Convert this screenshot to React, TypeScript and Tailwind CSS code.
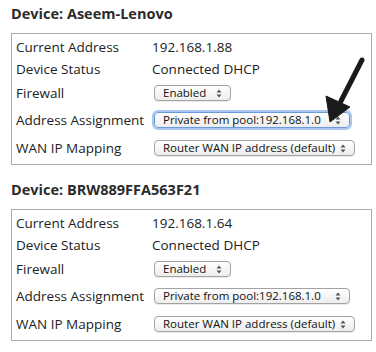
import React from 'react';

type Row = { label: string; value: string; kind: 'text' | 'select'; width?: number; focus?: boolean };

function Updown() {
  return (
    <svg width="6" height="9" viewBox="0 0 6 9" className="shrink-0">
      <path d="M3 0.5 L5.5 3.5 H0.5 Z" fill="#555" />
      <path d="M3 8.5 L5.5 5.5 H0.5 Z" fill="#555" />
    </svg>
  );
}

function FakeSelect({ text, width, focus }: { text: string; width: number; focus?: boolean }) {
  return (
    <div
      style={{ width }}
      className={`flex h-[16px] items-center justify-between rounded-[4px] border bg-gradient-to-b from-white to-[#ededed] pl-[8px] pr-[8px] text-[11.5px] leading-none whitespace-nowrap text-[#111] ${
        focus
          ? 'border-[#6c9ad8] shadow-[0_0_0_2px_#a9c7ef]'
          : 'border-[#a3a3a3] shadow-[0_1px_0_rgba(0,0,0,0.08)]'
      }`}
    >
      <span>{text}</span>
      <Updown />
    </div>
  );
}

function Device({ name, address, focus }: { name: string; address: string; focus?: boolean }) {
  const rows: Row[] = [
    { label: 'Current Address', value: address, kind: 'text' },
    { label: 'Device Status', value: 'Connected DHCP', kind: 'text' },
    { label: 'Firewall', value: 'Enabled', kind: 'select', width: 77 },
    { label: 'Address Assignment', value: 'Private from pool:192.168.1.0', kind: 'select', width: 196, focus },
    { label: 'WAN IP Mapping', value: 'Router WAN IP address (default)', kind: 'select', width: 201 },
  ];
  const heights = ['h-[23px]', 'h-[21px]', 'h-[26px]', 'h-[28px]', 'h-[28px]'];
  return (
    <div>
      <h2 className="h-[33px] pt-[5px] text-[14.5px] font-bold leading-[18px] text-[#2b2b2b]">Device: {name}</h2>
      <div className="w-[361px] border border-[#ababab] bg-white px-[4px] py-[2px]">
        {rows.map((r, i) => (
          <div key={r.label} className={`flex items-center ${heights[i]}`}>
            <div className="w-[136px] text-[13.5px] text-[#222]">{r.label}</div>
            {r.kind === 'text' ? (
              <div className="text-[13.5px] text-[#222]">{r.value}</div>
            ) : (
              <div className="pl-[2px]">
                <FakeSelect text={r.value} width={r.width!} focus={r.focus} />
              </div>
            )}
          </div>
        ))}
      </div>
    </div>
  );
}

export default function App() {
  return (
    <div
      className="relative h-[352px] w-[376px] overflow-hidden bg-white pl-[11px]"
      style={{ fontFamily: '"Lucida Grande", "Open Sans", sans-serif' }}
    >
      <div className="flex flex-col gap-[11px]">
        <Device name="Aseem-Lenovo" address="192.168.1.88" focus />
        <Device name="BRW889FFA563F21" address="192.168.1.64" />
      </div>
      {/* annotation arrow pointing at the address assignment select */}
      <svg className="absolute left-0 top-0" width="376" height="352" viewBox="0 0 376 352">
        <g fill="#1a1a1a" stroke="#1a1a1a" strokeLinejoin="round">
          <line x1="362" y1="60" x2="341" y2="101" strokeWidth="5" strokeLinecap="round" />
          <polygon points="330,122 326,96 350,107" strokeWidth="1" />
        </g>
      </svg>
    </div>
  );
}
